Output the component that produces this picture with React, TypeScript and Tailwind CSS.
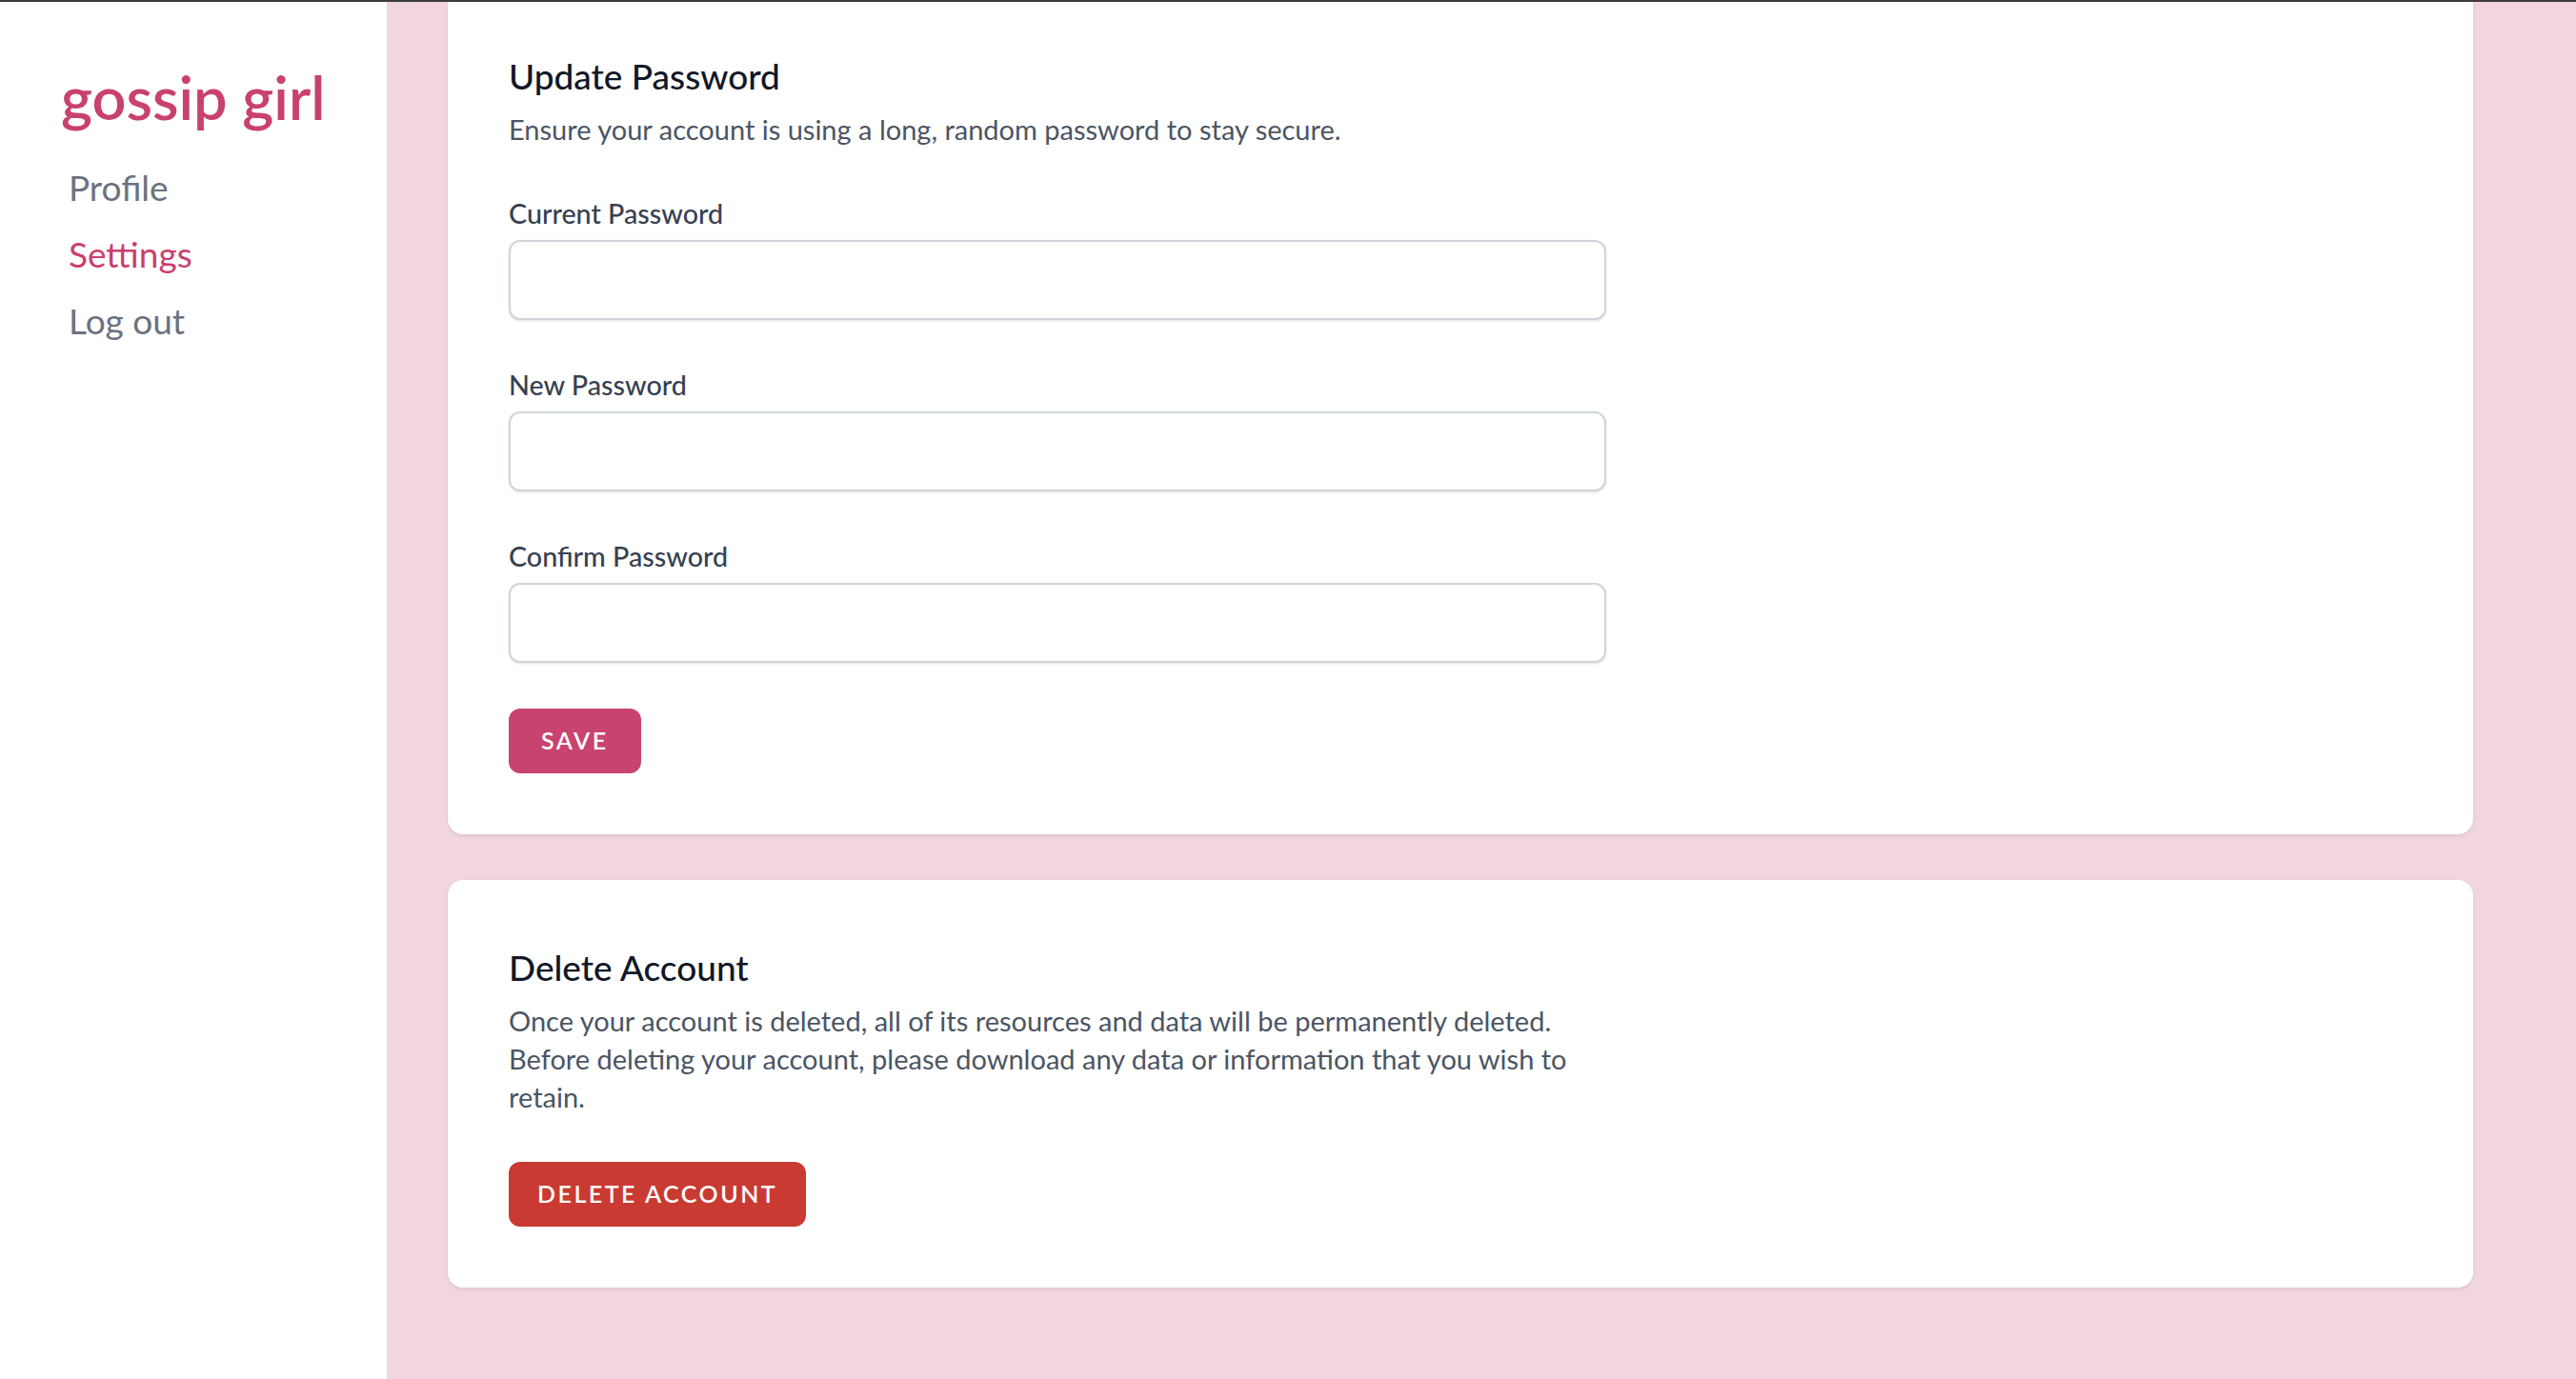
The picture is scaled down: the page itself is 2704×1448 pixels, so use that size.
import React from "react";

const FONT = "font-['Lato','Noto_Sans',sans-serif]";

interface FieldProps {
  label: string;
}

const Field: React.FC<FieldProps> = ({ label }) => {
  return (
    <div>
      <label className="block text-[28.7px] leading-[40px] font-medium text-[#374151]">
        {label}
      </label>
      <input
        type="password"
        className="mt-[8px] block w-full h-[84px] rounded-[12px] border-2 border-[#d1d5db] bg-white shadow-sm outline-none"
      />
    </div>
  );
};

const Sidebar: React.FC = () => {
  return (
    <aside className="w-[406px] shrink-0 bg-white pl-[64px] pt-[64px]">
      <div className="text-[63px] leading-[72px] font-semibold text-[#c9416f]">
        gossip girl
      </div>
      <nav className="mt-[31px] flex flex-col gap-[14px] pl-[8px]">
        <a className="text-[37px] leading-[56px] text-[#6b7280]">Profile</a>
        <a className="text-[37px] leading-[56px] text-[#c9416f]">Settings</a>
        <a className="text-[37px] leading-[56px] text-[#6b7280]">Log out</a>
      </nav>
    </aside>
  );
};

const UpdatePasswordCard: React.FC = () => {
  return (
    <section className="bg-white rounded-b-[16px] px-[64px] pt-[50px] pb-[64px] shadow-[0_2px_4px_rgba(0,0,0,0.08)]">
      <div className="max-w-[1152px]">
        <h2 className="text-[37px] leading-[56px] font-medium text-[#111827]">
          Update Password
        </h2>
        <p className="mt-[8px] text-[29px] leading-[40px] text-[#4b5563]">
          Ensure your account is using a long, random password to stay secure.
        </p>
        <form className="mt-[48px] flex flex-col gap-[48px]">
          <Field label="Current Password" />
          <Field label="New Password" />
          <Field label="Confirm Password" />
          <div className="flex items-center gap-[32px]">
            <button
              type="button"
              className="h-[68px] px-[34px] rounded-[12px] bg-[#c94370] text-white text-[25px] font-semibold uppercase tracking-[0.1em]"
            >
              Save
            </button>
          </div>
        </form>
      </div>
    </section>
  );
};

const DeleteAccountCard: React.FC = () => {
  return (
    <section className="bg-white rounded-[16px] p-[64px] shadow-[0_2px_4px_rgba(0,0,0,0.08)]">
      <div className="max-w-[1152px]">
        <h2 className="text-[37px] leading-[56px] font-medium text-[#111827]">
          Delete Account
        </h2>
        <p className="mt-[8px] text-[29px] leading-[40px] text-[#4b5563]">
          Once your account is deleted, all of its resources and data will be
          permanently deleted. Before deleting your account, please download any
          data or information that you wish to retain.
        </p>
        <button
          type="button"
          className="mt-[48px] h-[68px] px-[30px] rounded-[12px] bg-[#c93a32] text-white text-[25px] font-semibold uppercase tracking-[0.1em]"
        >
          Delete Account
        </button>
      </div>
    </section>
  );
};

export default function App() {
  return (
    <div className={`min-h-screen flex flex-col bg-[#f1d5e0] ${FONT}`}>
      <div className="h-[2px] bg-[#3c3c3c]" />
      <div className="flex flex-1">
        <Sidebar />
        <main className="flex-1 pl-[64px] pr-[108px] pb-[96px] flex flex-col gap-[48px]">
          <UpdatePasswordCard />
          <DeleteAccountCard />
        </main>
      </div>
    </div>
  );
}
